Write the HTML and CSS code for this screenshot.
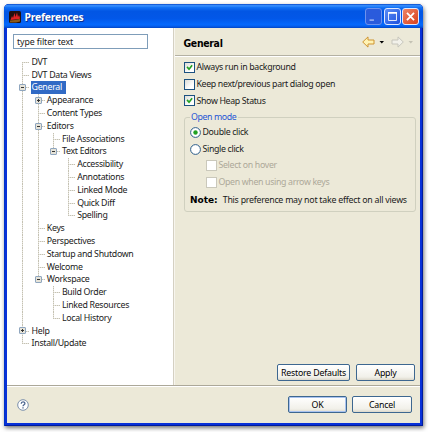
FILE: index.html
```html
<!DOCTYPE html>
<html lang="en">
<head>
<meta charset="utf-8">
<title>Preferences</title>
<link rel="stylesheet" href="styles.css">
</head>
<body>
<div class="window">
  <header class="titlebar">
    <svg class="app" width="12" height="12" viewBox="0 0 12 12"><rect width="12" height="12" rx="1.5" fill="#21100f"/><path d="M1.500 9 3 5l1 2 1.500-5 1 4L8 1.500 9 6l1-2 1 3-.5 1z" fill="#e02424"/><path d="M1 9.500 6 9l5-1v2.500l-4 1H1z" fill="#8a5a1c"/></svg>
    <h1 class="title">Preferences</h1>
    <div class="controls">
      <svg class="ctl min" viewBox="0 0 17 17"><path d="M4 11.500h5v2H4z" fill="#8fa9ef"/></svg>
      <svg class="ctl max" viewBox="0 0 17 17"><path d="M4 4h9v9H4z" fill="none" stroke="#fff"/><path d="M3.500 4.500h10" stroke="#fff" stroke-width="2"/></svg>
      <svg class="ctl close" viewBox="0 0 17 17"><path d="m4.500 4.500 8 8m0-8-8 8" stroke="#fff" stroke-width="2"/></svg>
    </div>
  </header>
  <div class="body">
    <aside class="side">
      <div class="filter">type filter text</div>
      <div class="tree">
        <div class="row"><i class="g first"></i><span>DVT</span></div>
        <div class="row"><i class="g tee"></i><span>DVT Data Views</span></div>
        <div class="row"><i class="g tee"><b class="box"></b></i><span class="sel">General</span></div>
        <div class="row"><i class="g bar"></i><i class="g tee"><b class="box plus"></b></i><span>Appearance</span></div>
        <div class="row"><i class="g bar"></i><i class="g tee"></i><span>Content Types</span></div>
        <div class="row"><i class="g bar"></i><i class="g tee"><b class="box"></b></i><span>Editors</span></div>
        <div class="row"><i class="g bar"></i><i class="g bar"></i><i class="g tee"></i><span>File Associations</span></div>
        <div class="row"><i class="g bar"></i><i class="g bar"></i><i class="g end"><b class="box"></b></i><span>Text Editors</span></div>
        <div class="row"><i class="g bar"></i><i class="g bar"></i><i class="g"></i><i class="g tee"></i><span>Accessibility</span></div>
        <div class="row"><i class="g bar"></i><i class="g bar"></i><i class="g"></i><i class="g tee"></i><span>Annotations</span></div>
        <div class="row"><i class="g bar"></i><i class="g bar"></i><i class="g"></i><i class="g tee"></i><span>Linked Mode</span></div>
        <div class="row"><i class="g bar"></i><i class="g bar"></i><i class="g"></i><i class="g tee"></i><span>Quick Diff</span></div>
        <div class="row"><i class="g bar"></i><i class="g bar"></i><i class="g"></i><i class="g end"></i><span>Spelling</span></div>
        <div class="row"><i class="g bar"></i><i class="g tee"></i><span>Keys</span></div>
        <div class="row"><i class="g bar"></i><i class="g tee"></i><span>Perspectives</span></div>
        <div class="row"><i class="g bar"></i><i class="g tee"></i><span>Startup and Shutdown</span></div>
        <div class="row"><i class="g bar"></i><i class="g tee"></i><span>Welcome</span></div>
        <div class="row"><i class="g bar"></i><i class="g end"><b class="box"></b></i><span>Workspace</span></div>
        <div class="row"><i class="g bar"></i><i class="g"></i><i class="g tee"></i><span>Build Order</span></div>
        <div class="row"><i class="g bar"></i><i class="g"></i><i class="g tee"></i><span>Linked Resources</span></div>
        <div class="row"><i class="g bar"></i><i class="g"></i><i class="g end"></i><span>Local History</span></div>
        <div class="row"><i class="g tee"><b class="box plus"></b></i><span>Help</span></div>
        <div class="row"><i class="g end"></i><span>Install/Update</span></div>
      </div>
    </aside>
    <main class="page">
      <div class="head">
        <h2>General</h2>
        <svg class="nav" width="52" height="12" viewBox="0 0 52 12"><path d="M.7 6 6 .9V4h6v4H6v3.100z" fill="#fff3b4" stroke="#cf9430"/><path d="M17.500 5h4.500l-2.200 2.500z" fill="#000"/><path d="M41.300 6 36 .9V4h-6v4h6v3.100z" fill="#f2f1ea" stroke="#c6c5bc"/><path d="M46.500 5H51l-2.200 2.500z" fill="#c4c2b4"/></svg>
      </div>
      <div class="form">
        <div class="opt"><svg class="chk" viewBox="0 0 10 10"><path d="m2.300 4.300 2.200 2.700 3.400-4.400" fill="none" stroke="#21a121" stroke-width="1.800"/></svg><span>Always run in background</span></div>
        <div class="opt"><svg class="chk" viewBox="0 0 10 10"></svg><span>Keep next/previous part dialog open</span></div>
        <div class="opt"><svg class="chk" viewBox="0 0 10 10"><path d="m2.300 4.300 2.200 2.700 3.400-4.400" fill="none" stroke="#21a121" stroke-width="1.800"/></svg><span>Show Heap Status</span></div>
        <fieldset class="group">
          <legend>Open mode</legend>
          <div class="opt"><svg class="radio" viewBox="0 0 11 11"><circle cx="5.500" cy="5.500" r="4.900"/><circle class="dot" cx="5.500" cy="5.500" r="2.200"/></svg><span>Double click</span></div>
          <div class="opt"><svg class="radio" viewBox="0 0 11 11"><circle cx="5.500" cy="5.500" r="4.900"/></svg><span>Single click</span></div>
          <div class="opt off"><svg class="chk" viewBox="0 0 10 10"></svg><span>Select on hover</span></div>
          <div class="opt off"><svg class="chk" viewBox="0 0 10 10"></svg><span>Open when using arrow keys</span></div>
          <div class="note"><strong>Note:</strong><span>This preference may not take effect on all views</span></div>
        </fieldset>
      </div>
      <div class="actions">
        <button class="btn restore">Restore Defaults</button>
        <button class="btn apply">Apply</button>
      </div>
    </main>
  </div>
  <footer class="foot">
    <svg class="help" width="12" height="12" viewBox="0 0 12 12"><circle cx="6" cy="6" r="5.300" fill="#fff" stroke="#7b8fab"/><path d="M4.200 4.700c0-2.400 3.700-2.400 3.700-.2C7.900 5.800 6 5.700 6 7.300M6 8.300v1.300" fill="none" stroke="#4c6690" stroke-width="1.300"/></svg>
    <button class="btn ok">OK</button>
    <button class="btn cancel">Cancel</button>
  </footer>
</div>
</body>
</html>
```

FILE: styles.css
```css
* { box-sizing: border-box; }
body {
  margin: 0;
  width: 429px;
  height: 432px;
  padding: 4px;
  background: #fff;
  overflow: hidden;
  font: 8.8px/12.8px "Noto Sans", sans-serif;
  letter-spacing: -.24px;
  color: #1a1a1a;
}
.window {
  width: 419px;
  height: 422px;
  padding: 0 3px 3px;
  display: flex;
  flex-direction: column;
  background: #0831d9;
  border-radius: 5px 5px 0 0;
  box-shadow: inset 1px 0 #0033c8, inset -1px -1px #001b9c, 1px 2px 4px rgba(0, 0, 0, .55);
}
.titlebar {
  height: 24px;
  flex: none;
  margin: 0 -3px;
  padding: 1px 4px 0 5px;
  display: flex;
  align-items: center;
  border-radius: 5px 5px 0 0;
  background: linear-gradient(#0848c8 0, #3a92ff 7%, #1170f4 15%, #0256e4 30%, #0257e8 60%, #0468fc 85%, #0560f0 92%, #0145c4);
}
.title {
  flex: 1;
  margin: 1px 0 0 3.500px;
  font: bold 10.4px/14px "Noto Sans", sans-serif;
  letter-spacing: -.22px;
  color: #fff;
  text-shadow: 1px 1px #0a2f90;
}
.controls { display: flex; gap: 1.5px; }
.ctl { width: 17px; height: 17px; border: 1px solid #dfe8ff; border-radius: 3px; }
.min { background: #2a5bdc; border-color: #6d92ee; }
.max { background: linear-gradient(135deg, #5b8cf6, #1c50dc); }
.close { background: linear-gradient(135deg, #ef8566, #d8401c); }
.body { flex: 1; min-height: 0; display: flex; background: #ece9d8; }
.side { width: 167px; flex: none; padding: 6px 6px 0; background: #fff; border-right: 1px solid #d4d0c2; }
.filter { width: 135px; height: 15px; padding: 1px 3px 0; border: 1px solid #7f9db9; letter-spacing: -.1px; }
.tree { padding: 6.800px 0 0 2.400px; letter-spacing: -.3px; }
.row { display: flex; height: 12.8px; white-space: nowrap; }
.row span { padding: 0 1px; }
.row .sel { padding: 0 4px 0 1px; background: #316ac5; color: #fff; }
.g {
  width: 15.2px;
  flex: none;
  display: flex;
  align-items: center;
  padding-left: 4px;
  background-repeat: no-repeat;
  --v: repeating-linear-gradient(#c4c1b2 0 1px, #e6e4dc 1px 2px);
  --h: repeating-linear-gradient(90deg, #c4c1b2 0 1px, #e6e4dc 1px 2px);
}
.bar { background-image: var(--v); background-size: 1px 100%; background-position: 7px 0; }
.tee { background-image: var(--v), var(--h); background-size: 1px 100%, 7px 1px; background-position: 7px 0, 7px 6px; }
.end { background-image: var(--v), var(--h); background-size: 1px 6px, 7px 1px; background-position: 7px 0, 7px 6px; }
.first { background-image: var(--v), var(--h); background-size: 1px 7px, 7px 1px; background-position: 7px 6px, 7px 6px; }
.box {
  width: 7px;
  height: 7px;
  border: 1px solid #8fa6bf;
  border-radius: 1px;
  background: linear-gradient(#333, #333) center / 3px 1px no-repeat, #e6e3d8;
}
.plus { background: linear-gradient(#333, #333) center / 3px 1px no-repeat, linear-gradient(#333, #333) center / 1px 3px no-repeat, #e6e3d8; }
.page { flex: 1; min-width: 0; display: flex; flex-direction: column; border-left: 1px solid #f7f5ee; }
.head {
  height: 28px;
  flex: none;
  display: flex;
  align-items: center;
  justify-content: space-between;
  padding: 1px 6px 0 8.500px;
  border-bottom: 1px solid #b4b1a3;
  box-shadow: 0 1px #fff;
}
h2 { margin: 1px 0 0; font: bold 10.4px/14px "DejaVu Sans Condensed", sans-serif; letter-spacing: -.3px; color: #000; }
.form { flex: 1; padding: 3px 4px 0 9px; }
.opt { height: 16.8px; display: flex; align-items: center; gap: 1.5px; white-space: nowrap; letter-spacing: -.34px; }
.chk { width: 11px; height: 11px; flex: none; border: 1px solid #1c5180; background: linear-gradient(135deg, #dcdcd7, #fff 70%); }
.radio { width: 11px; height: 11px; flex: none; fill: #fff; stroke: #2b5c88; }
.dot { fill: #21a121; stroke: none; }
.group { margin: 3px 0 0; padding: 1.5px 5px 0; min-width: 0; height: 100px; border: 1px solid #d0d0bf; border-radius: 3px; }
legend { padding: 0 2px 0 1px; height: 10px; line-height: 10px; letter-spacing: -.4px; color: #1f55d5; }
.off { padding-left: 16px; color: #aca899; }
.off .chk { border-color: #cac8bb; background: #fff; }
.note { display: flex; gap: 5px; height: 18px; align-items: center; white-space: nowrap; }
.note strong { font: bold 9px "DejaVu Sans", sans-serif; letter-spacing: 0; color: #000; }
.actions { display: flex; justify-content: flex-end; gap: 6px; padding: 0 5px 4px; }
.btn {
  height: 17px;
  padding: 1px 0 0;
  border: 1px solid #3d6790;
  border-radius: 2px;
  background: linear-gradient(#fff, #f1f0e9 80%, #dcd8cb);
  font: inherit;
  letter-spacing: inherit;
  color: #000;
}
.restore { width: 73px; letter-spacing: -.2px; }
.apply { width: 59px; }
.foot {
  height: 38px;
  flex: none;
  display: flex;
  align-items: center;
  padding: 0 8px 0 10px;
  background: #ece9d8;
  border-top: 1px solid #aca899;
  box-shadow: inset 0 1px #fff;
}
.help { margin-right: auto; }
.ok { width: 59px; box-shadow: inset 0 0 0 1px #a9c3f0; }
.cancel { width: 60px; margin-left: 5px; }
```
